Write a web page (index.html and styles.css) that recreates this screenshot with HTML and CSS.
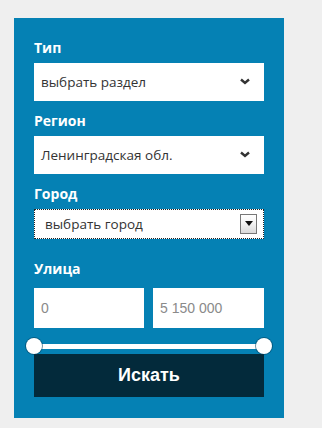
FILE: index.html
```html
<!DOCTYPE html>
<html>
<head lang="ru">
    <meta charset="UTF-8">
    <title>Поиск</title>
    <link rel="stylesheet" href="styles.css">
</head>
<body>
<div class="search" id="search">
    <div class="field">
        <div class="label">Тип</div>
        <div class="select">
            <span>выбрать раздел</span>
            <svg class="chev" width="10" height="7" viewBox="0 0 10 7"><path d="M1 1.5 L5 5 L9 1.5" fill="none" stroke="#333" stroke-width="2.4"/></svg>
        </div>
    </div>
    <div class="field">
        <div class="label">Регион</div>
        <div class="select">
            <span>Ленинградская обл.</span>
            <svg class="chev" width="10" height="7" viewBox="0 0 10 7"><path d="M1 1.5 L5 5 L9 1.5" fill="none" stroke="#333" stroke-width="2.4"/></svg>
        </div>
    </div>
    <div class="field">
        <div class="label">Город</div>
        <div class="native">
            <span>выбрать город</span>
            <div class="drop"><svg width="8" height="5" viewBox="0 0 8 5"><path d="M0 0 H8 L4 5 Z" fill="#111"/></svg></div>
        </div>
    </div>
    <div class="field street">
        <div class="label">Улица</div>
        <div class="range">
            <input type="text" placeholder="0">
            <input type="text" placeholder="5 150 000">
        </div>
        <div class="slider">
            <a href="javascript:;" class="handle min"></a>
            <a href="javascript:;" class="handle max"></a>
        </div>
    </div>
    <button class="go">Искать</button>
</div>
</body>
</html>
```

FILE: styles.css
```css
@charset "UTF-8";
/*initial reset*/
body,button,input,div{margin:0;padding:0}
*{box-sizing:border-box}
body{background:#efefef;font:13px/1.5 "Open Sans", "Liberation Sans", sans-serif;color:#333;}
a{text-decoration:none}
a,input,button{outline:none;}
a,button{cursor:pointer;}

.search{
    width:270px;
    margin:18px 0 0 14px;
    padding:20px 20px 21px;
    background:#0581b4;
}
.field{
    margin-bottom:10px;
}
.label{
    font-weight:bold;
    font-size:14px;
    line-height:20px;
    color:#fff;
    margin-bottom:5px;
}
.select{
    height:38px;
    background:#fff;
    display:flex;
    align-items:center;
    justify-content:space-between;
    padding:0 14px 0 7px;
    font-size:13.5px;
    color:#333;
}
.chev{
    display:block;
    margin-top:-2px;
}
.native{
    height:30px;
    background:#fff;
    border:1px dotted #222;
    display:flex;
    align-items:center;
    justify-content:space-between;
    padding:0 6px 0 10px;
    font-size:13.5px;
    color:#333;
}
.drop{
    width:17px;
    height:20px;
    border:1px solid #777;
    background:linear-gradient(#fff 0%, #f4f4f4 45%, #d9d9d9 100%);
    display:flex;
    align-items:center;
    justify-content:center;
}
.drop svg{
    display:block;
    margin-top:-2px;
}
.street{
    margin-top:20px;
    margin-bottom:0;
}
.street .label{
    margin-bottom:9px;
}
.range{
    display:flex;
    gap:9px;
}
.range input{
    width:0;
    flex:1;
    height:40px;
    border:0;
    background:#fff;
    padding:0 7px;
    font:14px "Liberation Sans", Arial, sans-serif;
    color:#333;
}
.range input::placeholder{
    color:#8a8a8a;
}
.range input:last-child{
    flex:0 0 111px;
}
.slider{
    height:5px;
    margin-top:16px;
    background:#fff;
    position:relative;
}
.handle{
    position:absolute;
    top:-6px;
    width:16px;
    height:16px;
    border-radius:50%;
    background:#fff;
    box-shadow:0 0 0 1px rgba(2,60,90,.55);
}
.min{
    left:-8px;
}
.max{
    right:-8px;
}
.go{
    display:block;
    width:230px;
    height:43px;
    margin-top:5px;
    border:0;
    background:#032a3b;
    color:#fff;
    font:bold 18px "Liberation Sans", Arial, sans-serif;
}
```
